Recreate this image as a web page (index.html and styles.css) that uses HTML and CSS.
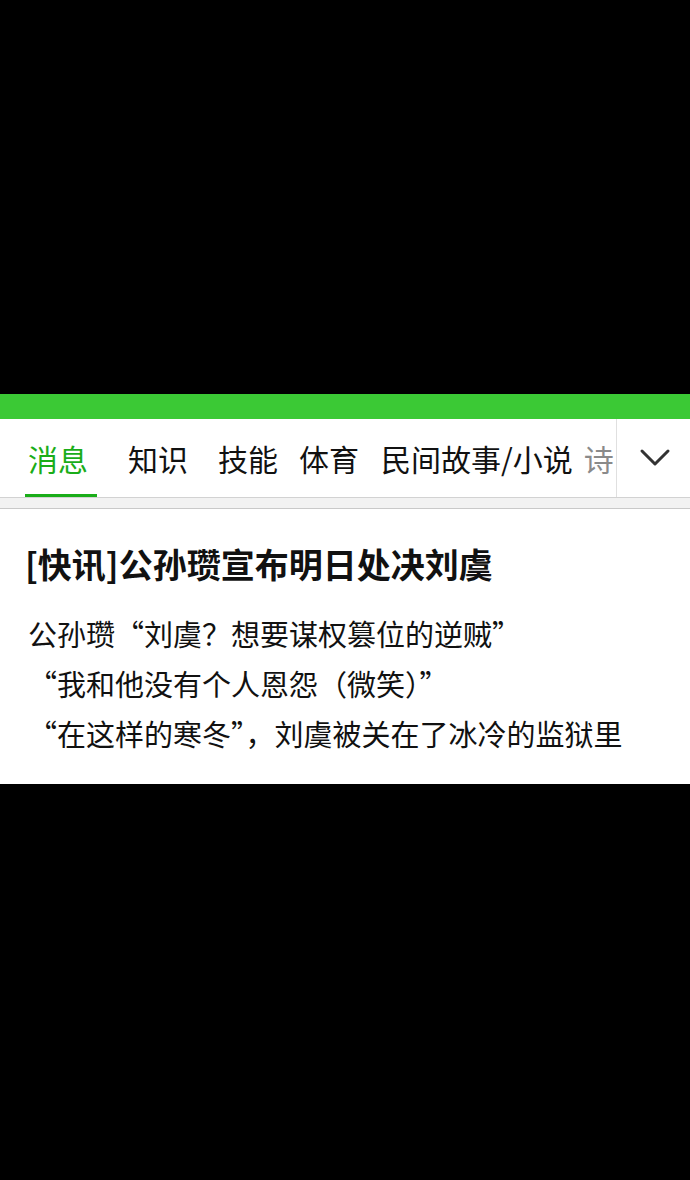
FILE: index.html
```html
<!DOCTYPE html>
<html lang="zh-CN">
<head>
<meta charset="utf-8">
<title>消息</title>
<link rel="stylesheet" href="styles.css">
</head>
<body>
<div class="screen">
  <div class="blank-top"></div>
  <div class="app">
    <div class="status-bar"></div>
    <div class="tab-bar">
      <div class="tabs">
        <div class="tab tab-active">消息</div>
        <div class="tab tab-2">知识</div>
        <div class="tab tab-3">技能</div>
        <div class="tab tab-4">体育</div>
        <div class="tab tab-5">民间故事/小说</div>
        <div class="tab tab-6 tab-faded">诗</div>
      </div>
      <div class="more">
        <svg class="chevron" width="32" height="20" viewBox="0 0 32 20">
          <polyline points="3,4 16,17 29,4" fill="none" stroke="#333" stroke-width="3" stroke-linecap="round" stroke-linejoin="round"/>
        </svg>
      </div>
    </div>
    <div class="divider-band"></div>
    <div class="article">
      <h1 class="title">[快讯]公孙瓒宣布明日处决刘虞</h1>
      <p class="line">公孙瓒“刘虞？想要谋权篡位的逆贼”</p>
      <p class="line">“我和他没有个人恩怨（微笑）”</p>
      <p class="line">“在这样的寒冬”，刘虞被关在了冰冷的监狱里</p>
    </div>
  </div>
</div>
</body>
</html>
```

FILE: styles.css
```css
html, body {
  margin: 0;
  padding: 0;
  background: #000;
}
body {
  font-family: "Noto Sans CJK SC", "Noto Sans", sans-serif;
  width: 690px;
  height: 1180px;
  overflow: hidden;
}
.screen {
  display: flex;
  flex-direction: column;
}
.blank-top {
  height: 394px;
  background: #000;
}
.app {
  background: #fff;
}
.status-bar {
  height: 25px;
  background: #3bc935;
}
.tab-bar {
  display: flex;
  height: 78px;
  border-bottom: 1px solid #d2d2d2;
  background: #fff;
}
.tabs {
  flex: 0 0 617px;
  display: flex;
  overflow: hidden;
  white-space: nowrap;
  border-right: 1px solid #e0e0e0;
  box-sizing: border-box;
}
.tab {
  flex: none;
  font-size: 30px;
  line-height: 78px;
  color: #111;
  box-sizing: border-box;
  height: 78px;
}
.tab-active {
  color: #1aad19;
  margin-left: 25px;
  padding: 0 9px 0 3px;
  border-bottom: 3px solid #1aad19;
}
.tab-2 { margin-left: 31px; }
.tab-3 { margin-left: 30px; }
.tab-4 { margin-left: 21px; }
.tab-5 { margin-left: 22px; }
.tab-6 { margin-left: 11px; }
.tab-faded {
  color: #8a8a8a;
}
.more {
  flex: 1;
  display: flex;
  align-items: center;
  justify-content: center;
}
.chevron {
  display: block;
  margin-left: 2px;
  margin-top: -2px;
}
.divider-band {
  height: 10px;
  background: #f2f2f2;
  border-bottom: 1px solid #c9c9c9;
}
.article {
  padding: 35px 28px 26px;
  background: #fff;
}
.title {
  margin: 0 0 24px -3px;
  font-size: 34px;
  line-height: 40px;
  font-weight: bold;
  color: #111;
}
.line {
  margin: 0;
  font-size: 29px;
  line-height: 50px;
  color: #111;
  white-space: nowrap;
}
```
